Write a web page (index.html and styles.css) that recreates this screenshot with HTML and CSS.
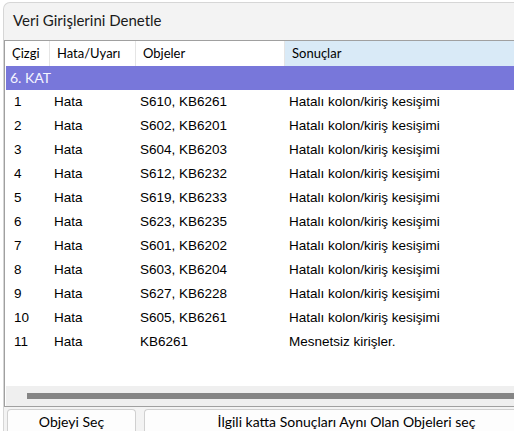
FILE: index.html
```html
<!DOCTYPE html>
<html>
	<head>
		<meta charset="utf-8">
		<title>Veri Girişlerini Denetle</title>
		<link rel="stylesheet" href="styles.css">
	</head>
	<body>
		<div class="window">
			<div class="title">Veri Girişlerini Denetle</div>
			<div class="panel">
				<div class="head">
					<div class="hc">Çizgi</div>
					<div class="hc">Hata/Uyarı</div>
					<div class="hc">Objeler</div>
					<div class="hc sorted">Sonuçlar</div>
				</div>
				<div class="rows">
					<div class="group">6. KAT</div>
					<div class="row"><span>1</span><span>Hata</span><span>S610, KB6261</span><span>Hatalı kolon/kiriş kesişimi</span></div>
					<div class="row"><span>2</span><span>Hata</span><span>S602, KB6201</span><span>Hatalı kolon/kiriş kesişimi</span></div>
					<div class="row"><span>3</span><span>Hata</span><span>S604, KB6203</span><span>Hatalı kolon/kiriş kesişimi</span></div>
					<div class="row"><span>4</span><span>Hata</span><span>S612, KB6232</span><span>Hatalı kolon/kiriş kesişimi</span></div>
					<div class="row"><span>5</span><span>Hata</span><span>S619, KB6233</span><span>Hatalı kolon/kiriş kesişimi</span></div>
					<div class="row"><span>6</span><span>Hata</span><span>S623, KB6235</span><span>Hatalı kolon/kiriş kesişimi</span></div>
					<div class="row"><span>7</span><span>Hata</span><span>S601, KB6202</span><span>Hatalı kolon/kiriş kesişimi</span></div>
					<div class="row"><span>8</span><span>Hata</span><span>S603, KB6204</span><span>Hatalı kolon/kiriş kesişimi</span></div>
					<div class="row"><span>9</span><span>Hata</span><span>S627, KB6228</span><span>Hatalı kolon/kiriş kesişimi</span></div>
					<div class="row"><span>10</span><span>Hata</span><span>S605, KB6261</span><span>Hatalı kolon/kiriş kesişimi</span></div>
					<div class="row"><span>11</span><span>Hata</span><span>KB6261</span><span>Mesnetsiz kirişler.</span></div>
				</div>
				<div class="hscroll"><div class="thumb"></div></div>
			</div>
			<div class="buttons">
				<div class="btn small">Objeyi Seç</div>
				<div class="btn wide">İlgili katta Sonuçları Aynı Olan Objeleri seç</div>
			</div>
		</div>
	</body>
</html>
```

FILE: styles.css
```css
* {margin: 0;padding: 0;box-sizing: border-box;}
html,body {width: 100%;height: 100%;overflow: hidden;}
body {background: #fff;font-family: Lato, "Noto Sans", sans-serif;color: #000;}

.window {margin: 2px 0 0 3px;height: 429px;overflow: hidden;background: #f3f3f3;border-top: 1px solid #d6d6d6;border-left: 1px solid #d6d6d6;border-top-left-radius: 7px;}
.title {height: 37px;line-height: 34px;padding-left: 9px;font-size: 15px;color: #1a1a1a;}

.panel {display: flex;flex-direction: column;height: 367px;background: #fff;border: 1px solid #a0a0a0;border-right: none;}
.head {display: grid;grid-template-columns: 45px 86px 149px 1fr;height: 25px;flex: none;}
.hc {padding-left: 7px;line-height: 24px;font-size: 13px;border-right: 1px solid #e5e5e5;}
.hc.sorted {background: #d9eaf7;border-right: none;}

.rows {flex: 1;padding-left: 1px;font-family: "Liberation Sans", Arial, sans-serif;font-size: 13.5px;}
.group {height: 24px;line-height: 24px;padding-left: 4px;background: #7877da;color: #f4f4ff;font-family: Lato, sans-serif;font-size: 14px;}
.row {display: grid;grid-template-columns: 44px 86px 149px 1fr;height: 24px;line-height: 24px;}
.row span {padding-left: 4px;white-space: nowrap;}
.row span:first-child {padding-left: 8px;}

.hscroll {height: 20px;margin-left: 1px;background: #efefef;padding: 7px 0 0 21px;flex: none;}
.thumb {height: 6px;background: #858585;}

.buttons {display: flex;gap: 8px;padding: 2px 0 0 3px;}
.btn {height: 22px;line-height: 24px;text-align: center;font-size: 14px;background: #fdfdfd;border: 1px solid #d0d0d0;border-bottom: none;border-radius: 4px 4px 0 0;white-space: nowrap;}
.btn.small {flex: none;width: 129px;}
.btn.wide {flex: 1;padding-left: 34px;border-right: none;border-top-right-radius: 0;}
```
